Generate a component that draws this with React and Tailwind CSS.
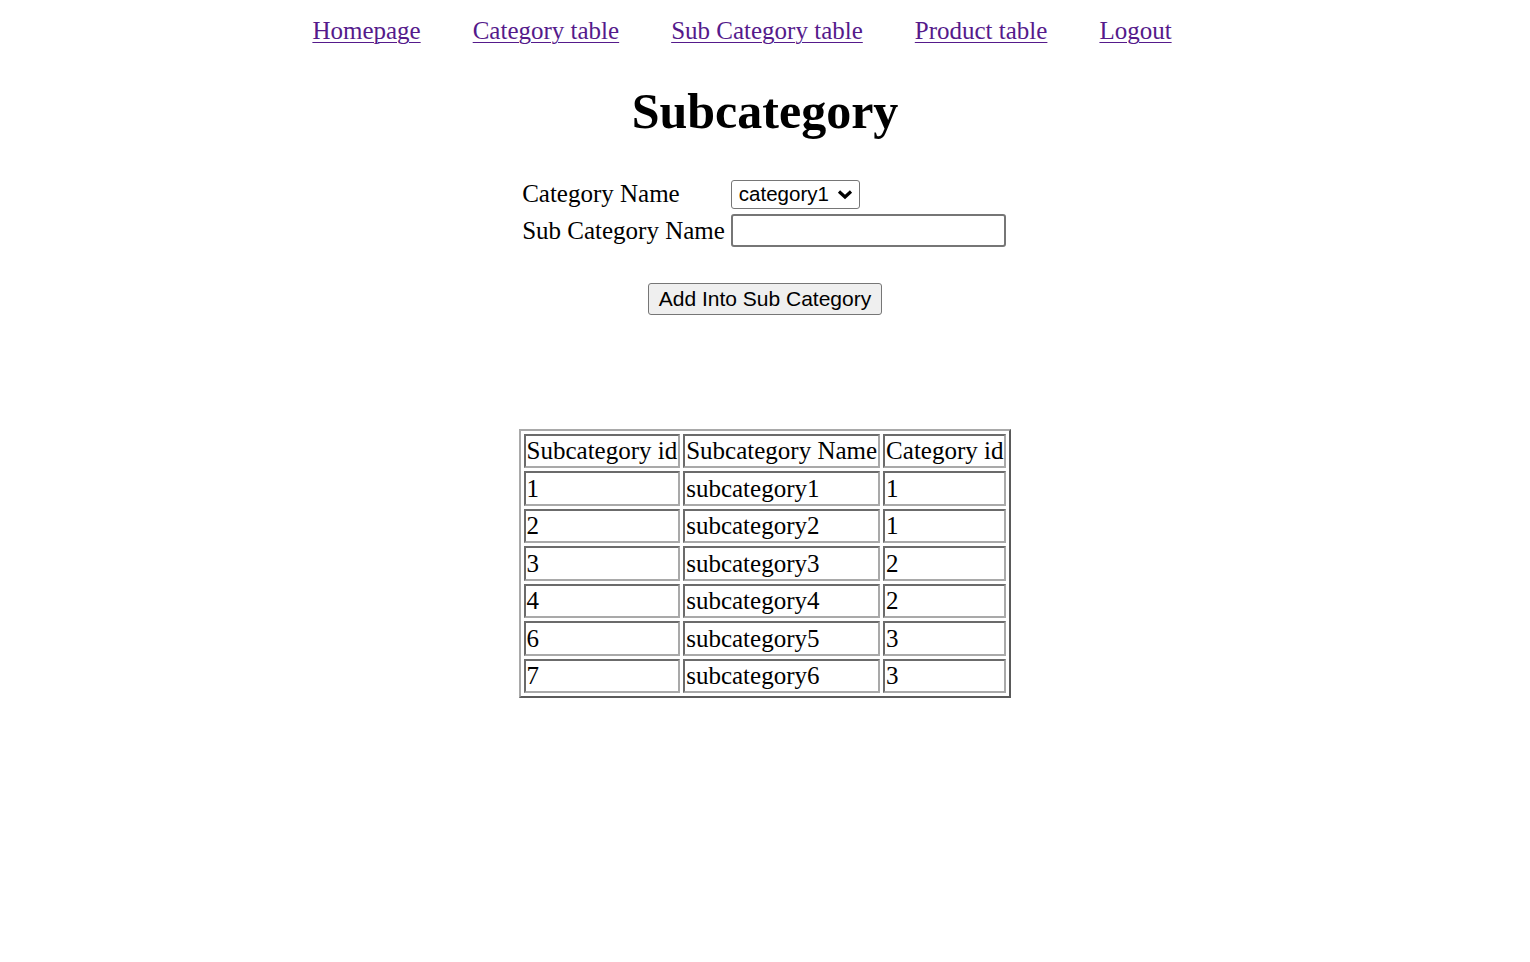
import React from "react";

const links = ["Homepage", "Category table", "Sub Category table", "Product table", "Logout"];

const rows = [
    ["1", "subcategory1", "1"],
    ["2", "subcategory2", "1"],
    ["3", "subcategory3", "2"],
    ["4", "subcategory4", "2"],
    ["6", "subcategory5", "3"],
    ["7", "subcategory6", "3"],
];

function Cell({ children }) {
    return (
        <td className="border-2 border-t-[#6b6b6b] border-l-[#6b6b6b] border-b-[#a9a9a9] border-r-[#a9a9a9] px-[1px] py-[1.5px] text-left align-middle whitespace-nowrap">
            {children}
        </td>
    );
}

export default function App() {
    return (
        <div className="min-h-screen bg-white text-black font-['Liberation_Serif','Times_New_Roman',serif] text-[25px] leading-[27.6px]">
            {/* nav */}
            <div className="flex justify-center pt-[17px] pr-[46px]">
                {links.map((l) => (
                    <a key={l} href="#" className="text-[#551a8b] underline underline-offset-[3px] decoration-1 mx-[26px]">
                        {l}
                    </a>
                ))}
            </div>

            <h1 className="text-center font-bold text-[50px] leading-[55px] mt-[39px]">Subcategory</h1>

            {/* form */}
            <div className="flex justify-center mt-[38px]">
                <div className="grid grid-cols-[auto_auto] gap-x-[6px] items-center pr-[2px]">
                    <div className="h-[35px] flex items-center">Category Name</div>
                    <div className="h-[35px] flex items-center">
                        <div className="w-[129px] h-[29px] border border-[#767676] rounded-[3px] flex items-center justify-between pl-[7px] pr-[6px] font-['Liberation_Sans',Arial,sans-serif] text-[20.5px] leading-none">
                            <span>category1</span>
                            <svg width="16" height="11" viewBox="0 0 16 11">
                                <path d="M2 2.5 L8 8 L14 2.5" fill="none" stroke="black" strokeWidth="3.2" />
                            </svg>
                        </div>
                    </div>
                    <div className="h-[38px] flex items-center">Sub Category Name</div>
                    <div className="h-[38px] flex items-center">
                        <div className="w-[275px] h-[33px] border-2 border-[#767676] rounded-[3px]" />
                    </div>
                </div>
            </div>

            <div className="flex justify-center mt-[33px]">
                <button className="w-[234px] h-[32px] bg-[#efefef] border border-[#767676] rounded-[3px] font-['Liberation_Sans',Arial,sans-serif] text-[21px] leading-none">
                    Add Into Sub Category
                </button>
            </div>

            {/* table */}
            <div className="flex justify-center mt-[114px]">
                <table className="border-separate border-spacing-[3px] border-2 border-t-[#a9a9a9] border-l-[#a9a9a9] border-b-[#5a5a5a] border-r-[#5a5a5a] leading-[27.5px]">
                    <tbody>
                        <tr>
                            <Cell>Subcategory id</Cell>
                            <Cell>Subcategory Name</Cell>
                            <Cell>Category id</Cell>
                        </tr>
                        {rows.map((r) => (
                            <tr key={r[0]}>
                                <Cell>{r[0]}</Cell>
                                <Cell>{r[1]}</Cell>
                                <Cell>{r[2]}</Cell>
                            </tr>
                        ))}
                    </tbody>
                </table>
            </div>
        </div>
    );
}
